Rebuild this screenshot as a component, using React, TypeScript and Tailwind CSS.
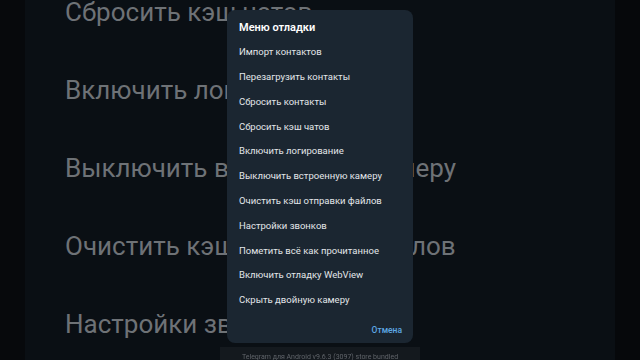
import React from "react";

const bgRows = [
  "Сбросить кэш чатов",
  "Включить логирование",
  "Выключить встроенную камеру",
  "Очистить кэш отправки файлов",
  "Настройки звонков",
];

const items = [
  "Импорт контактов",
  "Перезагрузить контакты",
  "Сбросить контакты",
  "Сбросить кэш чатов",
  "Включить логирование",
  "Выключить встроенную камеру",
  "Очистить кэш отправки файлов",
  "Настройки звонков",
  "Пометить всё как прочитанное",
  "Включить отладку WebView",
  "Скрыть двойную камеру",
];

export default function App() {
  return (
    <div
      className="w-[640px] h-[360px] flex bg-[#06080b] overflow-hidden"
      style={{ fontFamily: "Roboto, 'Noto Sans', sans-serif" }}
    >
      <div className="w-[25px] h-full bg-[#07090c]" />
      <div className="relative flex-1 h-full bg-[#0c1117] overflow-hidden">
        {/* settings list behind the dialog */}
        <div className="flex flex-col -mt-[27px] pl-[40px]">
          {bgRows.map((t) => (
            <div key={t} className="h-[78px] flex items-center">
              <span className="text-[26px] text-[#7b7f84] whitespace-nowrap leading-none">
                {t}
              </span>
            </div>
          ))}
        </div>

        {/* version strip under the dialog */}
        <div className="absolute left-[195px] top-[347px] w-[200px] h-[20px] bg-[#171c22] flex justify-center pt-[5px]">
          <span className="text-[7px] text-[#6b7076] whitespace-nowrap blur-[0.6px]">
            Telegram для Android v9.6.3 (3097) store bundled
          </span>
        </div>

        {/* dim overlay */}
        <div className="absolute inset-0 bg-black/10" />

        {/* debug menu dialog */}
        <div className="absolute left-[202px] top-[10px] w-[186px] h-[333px] rounded-[8px] bg-[#1b2631] flex flex-col">
          <div className="pl-[12px] pt-[12px] h-[30px] text-[11px] font-semibold text-white leading-none">
            Меню отладки
          </div>
          <div className="flex flex-col">
            {items.map((t) => (
              <div
                key={t}
                className="h-[24.8px] flex items-center pl-[12px] text-[9.5px] text-[#e3e6ea] whitespace-nowrap"
              >
                {t}
              </div>
            ))}
          </div>
          <div className="flex-1 flex items-end justify-end pr-[11px] pb-[6px]">
            <span className="text-[8.5px] font-medium text-[#5ea9e6]">Отмена</span>
          </div>
        </div>
      </div>
      <div className="w-[25px] h-full bg-[#06080b]" />
    </div>
  );
}
